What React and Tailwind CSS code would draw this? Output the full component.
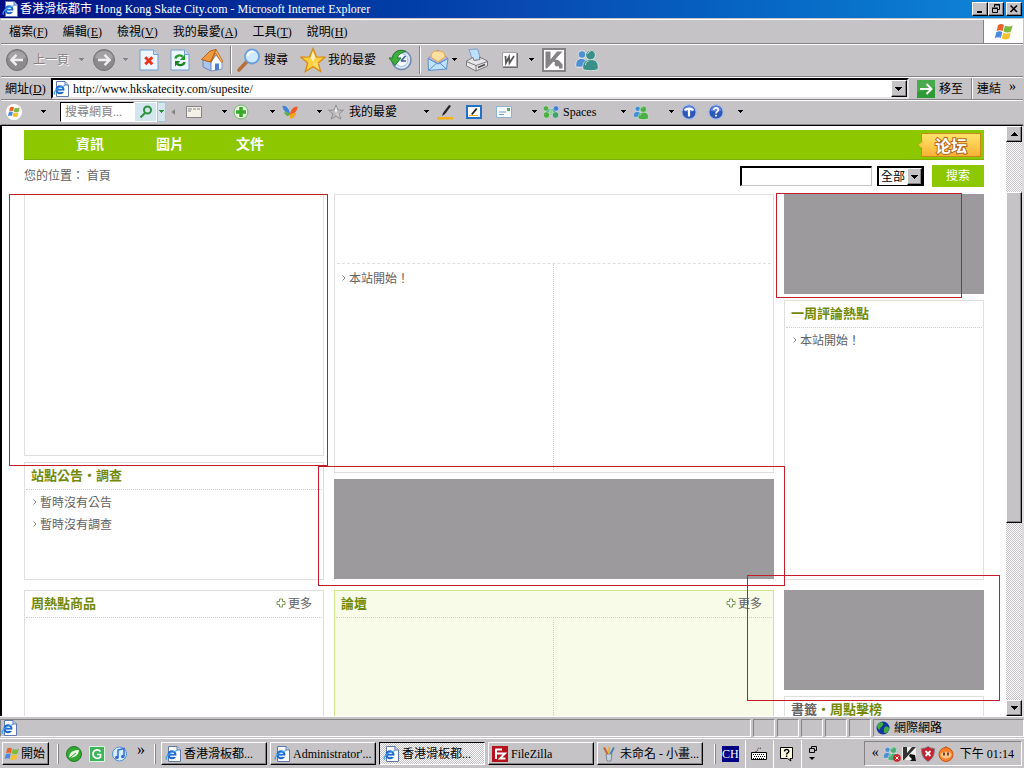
import React from "react";

const raised =
  "border border-t-white border-l-white border-r-black border-b-black shadow-[inset_-1px_-1px_0_#848284]";
const dither =
  "bg-[repeating-conic-gradient(#ffffff_0_25%,#c6c3c6_0_50%)] bg-[length:2px_2px]";

/* ---------- icons ---------- */

function IeIcon({ className = "size-4" }) {
  return (
    <svg viewBox="0 0 16 16" className={className} aria-hidden="true">
      <path d="M3.500.5h8.500l3.500 3.500v11.500h-12z" fill="#fff" stroke="#5f78ad" />
      <path d="M12 .5V4h3.500" fill="#c6d6f2" stroke="#5f78ad" />
      <circle cx="7" cy="8.800" r="3.500" fill="#d4ebff" stroke="#1c66cc" strokeWidth="2" />
      <path d="M4 8.800h6" stroke="#1c66cc" strokeWidth="1.500" />
      <path d="M8.800 9.600h3.200v1.300H8.800z" fill="#fff" />
      <path d="M1.600 13.600C-.2 11.500 4 6 12.200 4.500" fill="none" stroke="#3aa0ee" strokeWidth="1.200" />
    </svg>
  );
}

function WindowsFlag({ className }) {
  return (
    <svg viewBox="0 0 20 18" className={className} aria-hidden="true">
      <path d="M4 2.200C6 .8 8 .8 10 2L8.600 8C6.600 6.900 4.600 6.900 2.600 8.100z" fill="#e8622c" />
      <path d="M11 2.600c2.400 1.200 4.700 1.200 7.600-.2L17 8.500c-2.400 1.300-4.800 1.200-7.400 0z" fill="#7cba3c" />
      <path d="M2.300 9.200c2-1.200 4-1.200 6-.1L6.900 15C5 13.900 3 13.900.8 15.200z" fill="#4a8be0" />
      <path d="M9.300 9.700c2.600 1.200 5 1.200 7.400-.1l-1.500 6c-2.400 1.200-4.700 1.200-7.400-.1z" fill="#f6c12c" />
    </svg>
  );
}

function Caret({ className = "fill-black" }) {
  return (
    <svg viewBox="0 0 7 4" className={`h-1 w-[7px] ${className}`} shapeRendering="crispEdges" aria-hidden="true">
      <path d="M1 0h5v1H1zM2 1h3v1H2zM3 2h1v1H3z" />
    </svg>
  );
}

function WideCaret() {
  return (
    <svg viewBox="0 0 7 4" className="h-1 w-[7px]" shapeRendering="crispEdges" aria-hidden="true">
      <path d="M0 0h7v1H0zM1 1h5v1H1zM2 2h3v1H2zM3 3h1v1H3z" />
    </svg>
  );
}

function RoundArrow({ flip }) {
  return (
    <svg viewBox="0 0 24 24" className="size-6" aria-hidden="true">
      <circle cx="12" cy="12" r="10.500" fill="#8c8a8c" stroke="#737173" />
      <path d="M3 9.500a9.500 9.500 0 0 1 18 0c-5 3-13 3-18 0z" fill="#a5a2a5" />
      <path
        d={flip ? "M6 12h11M12.500 6.800 17.700 12l-5.200 5.200" : "M18 12H7M11.500 6.800 6.300 12l5.200 5.200"}
        fill="none" stroke="#efefef" strokeWidth="2.400"
      />
    </svg>
  );
}

function StopIcon() {
  return (
    <svg viewBox="0 0 20 22" className="h-[22px] w-5" aria-hidden="true">
      <path d="M1 1h13.500L19 5.500V21H1z" fill="#eef6ff" stroke="#6f9fd8" />
      <path d="M14.500 1v4.500H19" fill="#c6dcf5" stroke="#6f9fd8" />
      <path d="m6.300 8.300 7 7m0-7-7 7" stroke="#e8361c" strokeWidth="3" />
    </svg>
  );
}

function RefreshIcon() {
  return (
    <svg viewBox="0 0 20 22" className="h-[22px] w-5" aria-hidden="true">
      <path d="M1 1h13.500L19 5.500V21H1z" fill="#eef6ff" stroke="#6f9fd8" />
      <path d="M14.500 1v4.500H19" fill="#c6dcf5" stroke="#6f9fd8" />
      <path d="M5.300 9.500c.7-3 5-4.200 7.400-1.800" fill="none" stroke="#229a2a" strokeWidth="2.400" />
      <path d="M15 5.500v5.500H9.800z" fill="#229a2a" />
      <path d="M14.700 13c-.7 3-5 4.200-7.400 1.800" fill="none" stroke="#168220" strokeWidth="2.400" />
      <path d="M5 17.500V12h5.200z" fill="#168220" />
    </svg>
  );
}

function HomeIcon() {
  return (
    <svg viewBox="0 0 24 24" className="size-6" aria-hidden="true">
      <path d="M3 12l8 2v9l-8-4z" fill="#a9c4ee" stroke="#6a83bd" />
      <path d="m11 14 5-7 6 7v7l-11 2z" fill="#f7fbff" stroke="#7f97c8" />
      <path d="M1.500 11.500 10 3l6-1.500L10.500 14z" fill="#f09a3e" stroke="#b8621a" />
      <path d="m16 1.500 7 12-1.500 1L15.500 5 11 14.500z" fill="#f7b869" stroke="#b8621a" strokeWidth=".8" />
      <path d="M15 15.500h4V22l-4 .6z" fill="#4e7ed0" />
    </svg>
  );
}

function SearchIcon() {
  return (
    <svg viewBox="0 0 24 24" className="size-6" aria-hidden="true">
      <path d="m2 22 8-8.500" stroke="#b5713c" strokeWidth="3.600" strokeLinecap="round" />
      <circle cx="15" cy="8.500" r="7" fill="#cfeaff" stroke="#6a9fdc" strokeWidth="1.800" />
      <path d="M10.500 8a4.600 4.600 0 0 1 6-4.300" fill="none" stroke="#fff" strokeWidth="2" />
    </svg>
  );
}

function StarIcon({ className, fill, stroke }) {
  return (
    <svg viewBox="0 0 26 26" className={className} aria-hidden="true">
      <path
        d="m13 1.500 3.400 8.300 8.600.4-6.700 5.700 2.400 8.600L13 19.700l-7.700 4.800 2.400-8.600L1 10.200l8.600-.4z"
        fill={fill} stroke={stroke} strokeWidth="1.300"
      />
      <path d="m13 4 2.200 6.800-2.200 4-2.200-4z" fill="#fff" opacity=".7" />
      <path d="m13 15 7 1-2 1 1.500 5.500L13 18z" fill="#fff" opacity=".25" />
    </svg>
  );
}

function HistoryIcon() {
  return (
    <svg viewBox="0 0 24 24" className="size-6" aria-hidden="true">
      <circle cx="13.500" cy="12" r="9.500" fill="#dceafa" stroke="#7288b4" strokeWidth="1.600" />
      <circle cx="13.500" cy="12" r="6.500" fill="#f4faff" stroke="#a9bcd8" />
      <path d="m13 13 4.500-5M13 13h5" stroke="#3a5a94" strokeWidth="1.600" />
      <path d="M18 3.500C12 .5 5 3.500 4.500 10H1l6 7.500 6-7.500H9.500c.5-3.500 4-5.500 8.500-6.500z" fill="#3fae3f" stroke="#1e7c25" />
    </svg>
  );
}

function MailIcon() {
  return (
    <svg viewBox="0 0 24 24" className="size-6" aria-hidden="true">
      <path d="M2 10.500 12 2l10 8.500-10 5z" fill="#b8b8dc" stroke="#8e8ec0" />
      <path d="M5 9c0-5 3-6 7-6s7 1 7 6l-7 5z" fill="#fde0a0" stroke="#e8a64c" />
      <path d="M2 10.500 12 16l10-5.500L20.500 21 2.500 22.500z" fill="#bfe2fb" stroke="#5c8fce" />
      <path d="m2.500 22.500 8-7.200m10 5.700-7-6.200" stroke="#5c8fce" />
    </svg>
  );
}

function PrintIcon() {
  return (
    <svg viewBox="0 0 24 24" className="size-6" aria-hidden="true">
      <path d="M4 1.500 12.500 1 16 12l-8 1.500z" fill="#bfe0fa" stroke="#76a2d4" />
      <path d="M1.500 13 8 9.500l1 3 6-1-.6-2.500L22.500 13v5L11 23 1.500 18z" fill="#e7e5e7" stroke="#7b797b" />
      <path d="m1.500 13.500 9.500 4 11.500-4M11 17.500V23" fill="none" stroke="#7b797b" />
      <path d="m13 19.500 7-3" stroke="#4b494b" strokeWidth="1.500" />
    </svg>
  );
}

function WordIcon() {
  return (
    <svg viewBox="0 0 18 18" className="size-[18px]" aria-hidden="true">
      <path d="M1.500 1.500h14v14h-14z" fill="#fff" stroke="#a5a2a5" />
      <path d="M2 16.500h14.500V2" fill="none" stroke="#6b696b" />
      <path d="M4.500 5 5 12l3-6 .5 6L13 5" fill="none" stroke="#5a595a" strokeWidth="1.800" />
    </svg>
  );
}

function KIcon() {
  return (
    <svg viewBox="0 0 24 24" className="size-6" aria-hidden="true">
      <path d="M1 1h22v22H1z" fill="#fff" stroke="#848284" strokeWidth="2" />
      <path d="M3.500 3.500h5v8l6.500-8h5.500L5 20.500H3.500z" fill="#848284" />
      <path d="m12 11 5 1.500 3.500 4v4h-3.300l-.5-2.500-2.700.5-1.500-2 .5-2-2.500-1.500z" fill="#848284" />
    </svg>
  );
}

function Buddies({ className, left, right }) {
  return (
    <svg viewBox="0 0 24 22" className={className} aria-hidden="true">
      <path d="M1 18c-1-6 2-8.500 5.500-8.500S13 12 12 18z" fill={left} stroke="#fff" strokeWidth=".6" />
      <circle cx="7" cy="5.500" r="3.800" fill={left} stroke="#fff" strokeWidth=".6" />
      <path d="M8 20.500c-1-7 2-10 7.500-10S24 13.500 23 20.500c-4 1.500-11 1.500-15 0z" fill={right} stroke="#fff" strokeWidth=".6" />
      <circle cx="15.500" cy="6" r="4.800" fill={right} stroke="#fff" strokeWidth=".6" />
      <path d="M12.600 5a3 3 0 0 1 3-2.600M10.500 16c0-2 1-3.500 3-4" fill="none" stroke="#fff" opacity=".7" />
    </svg>
  );
}

function GoIcon() {
  return (
    <svg viewBox="0 0 18 18" className="size-[18px]" aria-hidden="true">
      <path d="M0 0h18v18H0z" fill="#2f9a3a" />
      <path d="M0 0h18v7L0 12z" fill="#58b85a" opacity=".6" />
      <path d="M3 9h11M9.500 4 14.500 9l-5 5" fill="none" stroke="#fff" strokeWidth="2" />
    </svg>
  );
}

function Butterfly() {
  return (
    <svg viewBox="0 0 16 16" className="size-4" aria-hidden="true">
      <path d="M8 10C7 4 3.500 1 .5 2c0 3.500 3 7 7.500 8z" fill="#3d86d8" />
      <path d="M2 8.500c2-.5 4.500.5 6 1.500-1 3-4 2.500-6-1.500z" fill="#58b043" />
      <path d="M8 11c0-5 4-9 7.500-8.500C16 6 12 10.500 8 11z" fill="#ee5a24" />
      <path d="M8 10.500c2-1.500 5-2 6.500-1C13 13 10 15 8 14.500z" fill="#f6a21c" />
    </svg>
  );
}

function PlusBadge() {
  return (
    <svg viewBox="0 0 16 16" className="size-4" aria-hidden="true">
      <circle cx="8" cy="8" r="7" fill="#e7f7e0" stroke="#6fb865" />
      <path d="M6.200 3h3.600v3.200H13v3.600H9.800V13H6.200V9.800H3V6.200h3.200z" fill="#3aa82e" />
    </svg>
  );
}

function RoundBadge({ children }) {
  return (
    <svg viewBox="0 0 16 16" className="size-4" aria-hidden="true">
      <circle cx="8" cy="8" r="7.200" fill="#2e58b8" stroke="#a9bce6" strokeWidth="1.200" />
      <path d="M2.500 6.500a5.600 5.600 0 0 1 11 0c-3 1.500-8 1.500-11 0z" fill="#5f88dc" />
      {children}
    </svg>
  );
}

function Paws() {
  return (
    <svg viewBox="0 0 16 14" className="h-[14px] w-4" aria-hidden="true">
      <g stroke="#fff" strokeWidth=".4">
        <path d="M3 4h10v6H3z" fill="#3b9d9b" />
        <circle cx="3" cy="3.500" r="2.700" fill="#4dae43" />
        <circle cx="3.500" cy="10" r="3.200" fill="#4dae43" />
        <circle cx="13" cy="3.500" r="2.700" fill="#3f7fd6" />
        <circle cx="12.500" cy="10" r="3.200" fill="#3fa06d" />
        <circle cx="8" cy="7" r="2.200" fill="#8fd08a" />
      </g>
    </svg>
  );
}

function GreenPlus() {
  return (
    <svg viewBox="0 0 10 10" className="size-[10px]" aria-hidden="true">
      <path d="M3.500 1v2.500H1v3h2.500V9h3V6.500H9v-3H6.500V1z" fill="#fff" stroke="#7a9a4e" />
    </svg>
  );
}

/* ---------- browser chrome ---------- */

function TitleBar() {
  return (
    <header className="flex h-[18px] shrink-0 items-center bg-linear-to-r from-[#000c82] via-[#0848b0] to-[#1086d8] pr-0.5 pl-0.5 text-white">
      <IeIcon />
      <h1 className="flex-1 truncate pl-0.5 leading-[18px]">香港滑板都市 Hong Kong Skate City.com - Microsoft Internet Explorer</h1>
      <div className="flex">
        <button aria-label="最小化" className={`flex h-[14px] w-4 items-center justify-center bg-[#c6c3c6] ${raised}`}>
          <svg viewBox="0 0 10 10" className="size-[10px]"><path d="M2 7h5v2H2z" /></svg>
        </button>
        <button aria-label="還原" className={`flex h-[14px] w-4 items-center justify-center bg-[#c6c3c6] ${raised}`}>
          <svg viewBox="0 0 10 10" className="size-[10px]" fill="none" stroke="#000">
            <path d="M3.500 3V.5h5v5H6.500M3 1h6M1.500 4.500h5v4h-5zM1 4h6" />
          </svg>
        </button>
        <button aria-label="關閉" className={`ml-0.5 flex h-[14px] w-4 items-center justify-center bg-[#c6c3c6] ${raised}`}>
          <svg viewBox="0 0 10 10" className="size-[10px]"><path d="m1.500 1.500 6.500 6.500m0-6.500L1.500 8" stroke="#000" strokeWidth="1.600" /></svg>
        </button>
      </div>
    </header>
  );
}

const MENUS = [["檔案", "F"], ["編輯", "E"], ["檢視", "V"], ["我的最愛", "A"], ["工具", "T"], ["說明", "H"]];

function MenuBar() {
  return (
    <nav className="flex h-[25px] shrink-0 items-stretch border-t border-b border-t-white border-b-[#848284]">
      <ul className="flex flex-1 items-center gap-[15px] border-r border-[#848284] pl-2">
        {MENUS.map(([label, key]) => (
          <li key={key}>
            <button>{label}(<span className="underline">{key}</span>)</button>
          </li>
        ))}
      </ul>
      <div className="flex w-[39px] items-center justify-center bg-white">
        <WindowsFlag className="h-[18px] w-5" />
      </div>
    </nav>
  );
}

function Divider() {
  return <span className="h-7 w-0.5 border-l border-l-[#848284] bg-white" />;
}

function IconButton({ label, children }) {
  return <button aria-label={label} className="flex items-center justify-center">{children}</button>;
}

function StandardToolbar() {
  return (
    <div className="grid h-[33px] shrink-0 grid-cols-[32px_36px_24px_22px_20px_28px_33px_32px_6px_30px_34px_30px_58px_27px_13px_24px_8px_38px_28px_14px_32px_34px] items-center justify-items-center border-t border-b border-t-white border-b-[#848284] pb-px">
      <IconButton label="返回"><RoundArrow /></IconButton>
      <button disabled className="whitespace-nowrap text-[#848284] [text-shadow:1px_1px_0_#fff]">上一頁</button>
      <Caret className="fill-[#848284]" />
      <IconButton label="下一頁"><RoundArrow flip /></IconButton>
      <Caret className="fill-[#848284]" />
      <IconButton label="停止"><StopIcon /></IconButton>
      <IconButton label="重新整理"><RefreshIcon /></IconButton>
      <IconButton label="首頁"><HomeIcon /></IconButton>
      <Divider />
      <IconButton label="搜尋圖示"><SearchIcon /></IconButton>
      <button className="justify-self-start">搜尋</button>
      <StarIcon className="size-[26px]" fill="#fdd040" stroke="#d98a12" />
      <button className="justify-self-start">我的最愛</button>
      <IconButton label="記錄"><HistoryIcon /></IconButton>
      <Divider />
      <IconButton label="郵件"><MailIcon /></IconButton>
      <Caret />
      <IconButton label="列印"><PrintIcon /></IconButton>
      <IconButton label="編輯"><WordIcon /></IconButton>
      <Caret />
      <IconButton label="防護"><KIcon /></IconButton>
      <IconButton label="Messenger"><Buddies className="h-[22px] w-6" left="#4f8fd0" right="#3a8f86" /></IconButton>
    </div>
  );
}

function AddressBar() {
  return (
    <div className="flex h-[23px] shrink-0 items-center border-t border-b border-t-white border-b-[#848284] pl-1">
      <label htmlFor="url" className="w-[46px] whitespace-nowrap">網址(<span className="underline">D</span>)</label>
      <div className="flex h-[21px] flex-1 items-center border-2 border-t-black border-l-black border-r-[#e7e3e7] border-b-[#e7e3e7] bg-white">
        <IeIcon />
        <input id="url" defaultValue="http://www.hkskatecity.com/supesite/" className="min-w-0 flex-1 pl-1 outline-none" />
        <button aria-label="網址清單" className={`flex h-full w-4 items-center justify-center bg-[#c6c3c6] ${raised}`}><WideCaret /></button>
      </div>
      <button className="flex h-full items-center gap-1 border-r border-[#848284] px-2"><GoIcon />移至</button>
      <button className="h-full border-l border-white pr-2 pl-1">連結</button>
      <span className="w-[14px] pb-1 text-sm">»</span>
    </div>
  );
}

function SearchToolbar() {
  return (
    <div className="grid h-[25px] shrink-0 grid-cols-[26px_33px_74px_23px_9px_14px_28px_20px_26px_22px_28px_19px_26px_48px_33px_30px_27px_34px_17px_25px_37px_27px_28px_20px_27px_28px_14px] items-center justify-items-center border-t border-b border-t-white border-b-[#848284] pb-px">
      <span className="flex size-4 items-center justify-center rounded-full bg-white"><WindowsFlag className="h-3 w-[14px]" /></span>
      <Caret />
      <input aria-label="搜尋網頁" placeholder="搜尋網頁..." className="h-5 w-full border border-t-black border-l-black border-r-white border-b-white bg-white pl-1 outline-none placeholder:text-[#848284]" />
      <button aria-label="搜尋" className="flex h-5 w-full items-center justify-center border border-white bg-[#d3e6ee]">
        <svg viewBox="0 0 14 14" className="size-[14px]" fill="none" stroke="#2d9140" strokeWidth="2"><circle cx="8.500" cy="5" r="3.500" /><path d="m6 8-4.500 4.500" /></svg>
      </button>
      <button aria-label="搜尋選項" className="flex h-5 w-full items-center justify-center border border-[#9ccbdc] bg-[#d3e6ee]"><Caret className="fill-[#2d9140]" /></button>
      <svg viewBox="0 0 4 6" className="h-[6px] w-1"><path d="M4 0v6L.5 3z" fill="#848284" /></svg>
      <svg viewBox="0 0 16 12" className="h-3 w-4"><path d="M.5.5h15v11H.5z" fill="#f3f1e8" stroke="#848284" /><path d="M2 3h4M7 3h3M11 3h3M2 5h3" stroke="#848284" /></svg>
      <span className="justify-self-end"><Caret /></span>
      <PlusBadge />
      <span className="justify-self-end"><Caret /></span>
      <Butterfly />
      <span className="justify-self-end"><Caret /></span>
      <StarIcon className="size-4" fill="#bdbbbd" stroke="#848284" />
      <button>我的最愛</button>
      <span className="justify-self-end"><Caret /></span>
      <svg viewBox="0 0 16 16" className="size-4"><path d="M0 13h16v2.500H0z" fill="#f3b21a" /><path d="m5 12 1-3 6-8 2 1-6 8z" fill="#222" /></svg>
      <svg viewBox="0 0 16 14" className="h-[14px] w-4"><path d="M1 1h14v12H1z" fill="#fff" stroke="#2271c8" strokeWidth="2" /><path d="m5 9 5-6 1.500 1L6.500 10z" fill="#222" /><path d="M3 10.500h9" stroke="#f3b21a" /></svg>
      <svg viewBox="0 0 16 12" className="h-3 w-4"><path d="M.5.5h15v11H.5z" fill="#f4faff" stroke="#8cb3cf" /><path d="M3 6h7M3 8.500h5" stroke="#74a0bf" /><path d="M11 2h3v3h-3z" fill="#58a85a" /></svg>
      <span className="justify-self-end"><Caret /></span>
      <Paws />
      <button className="justify-self-start">Spaces</button>
      <span className="justify-self-end"><Caret /></span>
      <Buddies className="h-[15px] w-4" left="#3d8fd6" right="#4caf45" />
      <span className="justify-self-end"><Caret /></span>
      <RoundBadge><path d="M4 6.500C5 4 11 4 12 6.500M8 5v7.500" fill="none" stroke="#fff" strokeWidth="2.200" /></RoundBadge>
      <RoundBadge><path d="M5.800 6c0-3 4.700-2.800 4.500 0C10.200 7.700 8 7.500 8 9.500M8 10.800v1.700" fill="none" stroke="#fff" strokeWidth="1.700" /></RoundBadge>
      <span className="justify-self-end"><Caret /></span>
    </div>
  );
}

function ScrollBar() {
  return (
    <div className={`flex w-4 shrink-0 flex-col ${dither}`}>
      <button aria-label="向上捲動" className={`flex h-4 items-center justify-center bg-[#c6c3c6] ${raised}`}>
        <span className="rotate-180"><WideCaret /></span>
      </button>
      <div className="flex-[50]" />
      <div className={`flex-[330] bg-[#c6c3c6] ${raised}`} />
      <div className="flex-[177]" />
      <button aria-label="向下捲動" className={`flex h-4 items-center justify-center bg-[#c6c3c6] ${raised}`}><WideCaret /></button>
    </div>
  );
}

/* ---------- web page ---------- */

/* Red outline drawn over a panel and its surroundings. */
function Mark({ className }) {
  return <div className={`pointer-events-none absolute z-10 border border-[#c61c29] ${className}`} />;
}

function AdBlock({ children }) {
  return <div className="relative h-[100px] shrink-0 bg-[#9c9a9c]">{children}</div>;
}

function PanelTitle({ children, more }) {
  return (
    <div className="mx-px flex h-[27px] items-center justify-between border-b border-dotted border-[#cfcfc4] pr-[10px] pb-0.5 pl-[5px]">
      <h2 className="text-[13px] font-bold text-[#738a08]">{children}</h2>
      {more && <a href="#more" className="flex items-center gap-0.5"><GreenPlus />更多</a>}
    </div>
  );
}

function Item({ children }) {
  return (
    <li className="flex h-[22px] items-center gap-[3px]">
      <svg viewBox="0 0 4 6" className="h-[6px] w-1" fill="none" stroke="#848284"><path d="M.5.5 3 3 .5 5.500" /></svg>
      <a href="#item">{children}</a>
    </li>
  );
}

const panel = "border border-[#dedfde]";

function SiteHeader() {
  return (
    <div className="flex h-[30px] items-center border-b border-[#7bae00] bg-[#8cc700] pr-[3px] pl-[26px]">
      <ul className="flex flex-1 pb-[3px] text-sm font-bold text-white">
        {["資訊", "圖片", "文件"].map((t) => (
          <li key={t} className="w-20 text-center"><a href="#nav">{t}</a></li>
        ))}
      </ul>
      <a href="#forum" className="relative flex h-6 w-[60px] items-center justify-center border border-[#c98a1c] bg-linear-to-b from-[#ffe36a] to-[#f9b233] text-base font-bold text-white [-webkit-text-stroke:2px_#b5651d] [paint-order:stroke_fill]">
        <svg viewBox="0 0 5 8" className="absolute -left-1 h-2 w-[5px]"><path d="M5 0v8L.5 4z" fill="#fbc84a" stroke="#c98a1c" strokeWidth=".6" /></svg>
        论坛
      </a>
    </div>
  );
}

function SearchRow() {
  return (
    <form className="flex h-[34px] items-center justify-between pb-0.5" onSubmit={(e) => e.preventDefault()}>
      <p className="pb-0.5">您的位置： <a href="#home">首頁</a></p>
      <div className="flex items-center gap-[5px]">
        <input aria-label="關鍵字" className="h-5 w-[132px] border-t-2 border-r border-b border-l-2 border-t-black border-r-[#c6c3c6] border-b-[#c6c3c6] border-l-black bg-white outline-none" />
        <div className="relative flex">
          <select aria-label="分類" className="h-5 w-[47px] appearance-none border-t-2 border-r-2 border-b border-l-2 border-black bg-white pb-0.5 pl-0.5 text-black outline-none">
            <option>全部</option>
          </select>
          <span className={`pointer-events-none absolute top-0.5 right-0.5 bottom-px flex w-[15px] items-center justify-center bg-[#c6c3c6] ${raised}`}><WideCaret /></span>
        </div>
        <button className="ml-[3px] h-[22px] w-[52px] bg-[#8cc700] pb-0.5 text-white">搜索</button>
      </div>
    </form>
  );
}

function Site() {
  return (
    <main className="min-w-0 flex-1 overflow-hidden bg-white pt-1 font-['Noto_Sans_CJK_TC','Liberation_Serif',sans-serif] text-[#636163]">
      <div className="mx-auto max-w-[960px]">
        <SiteHeader />
        <SearchRow />
        <div className="grid grid-cols-[300px_minmax(0,1fr)_200px] gap-[10px]">
          <div className="flex flex-col gap-[6px]">
            <section className={`relative h-[262px] ${panel}`}>
              <Mark className="-top-px -right-[5px] -bottom-[11px] -left-4" />
            </section>
            <section className={`flex-1 ${panel}`}>
              <PanelTitle>站點公告‧調查</PanelTitle>
              <ul className="px-2 pt-px"><Item>暫時沒有公告</Item><Item>暫時沒有調查</Item></ul>
            </section>
          </div>

          <div className="flex flex-col gap-[6px]">
            <section className={`flex h-[279px] flex-col ${panel}`}>
              <div className="mx-0.5 h-[69px] border-b border-dashed border-[#dedfde]" />
              <div className="grid flex-1 grid-cols-2 pb-0.5">
                <ul className="border-r border-dotted border-[#cfcfcf] px-[7px] pt-[3px]"><Item>本站開始！</Item></ul>
              </div>
            </section>
            <AdBlock><Mark className="-top-[13px] -right-[11px] -bottom-[7px] -left-4" /></AdBlock>
          </div>

          <div className="flex flex-col gap-[6px]">
            <AdBlock><Mark className="-top-px right-[22px] -bottom-1 -left-2" /></AdBlock>
            <section className={`h-[280px] ${panel}`}>
              <PanelTitle>一周評論熱點</PanelTitle>
              <ul className="px-2 pt-px"><Item>本站開始！</Item></ul>
            </section>
          </div>

          <section className={`h-[260px] ${panel}`}>
            <PanelTitle more>周熱點商品</PanelTitle>
          </section>

          <section className="flex h-[260px] flex-col border border-[#cfe88c] bg-[#f7fbe7]">
            <PanelTitle more>論壇</PanelTitle>
            <div className="grid flex-1 grid-cols-2 pt-0.5">
              <div className="border-r border-dotted border-[#c6cfb5]" />
            </div>
          </section>

          <div className="flex flex-col gap-[6px]">
            <AdBlock><Mark className="-top-[15px] -right-4 -bottom-[11px] -left-[37px]" /></AdBlock>
            <section className={`flex-1 ${panel}`}>
              <PanelTitle><span className="text-[#636163]">書籤</span>‧周點擊榜</PanelTitle>
            </section>
          </div>
        </div>
      </div>
    </main>
  );
}

/* ---------- status bar and taskbar ---------- */

const sunken = "border border-t-[#848284] border-l-[#848284] border-r-white border-b-white";

function StatusBar() {
  return (
    <footer className="flex h-[22px] shrink-0 gap-0.5 border-t border-white pt-0.5 pb-px">
      <div className={`flex flex-1 items-center ${sunken}`}><IeIcon /></div>
      {[0, 1, 2, 3, 4].map((i) => <div key={i} className={`w-[22px] ${sunken}`} />)}
      <div className={`flex w-[151px] items-center gap-1 pl-0.5 ${sunken}`}>
        <svg viewBox="0 0 14 14" className="size-[14px]"><circle cx="7" cy="7" r="6.500" fill="#12389c" /><path d="M3 2c3-2 5 0 4 2S4 6 4 8 1 7 1 5zM9 6c2-1 4 0 4 2s-2 4-4 4-1-5 0-6z" fill="#3fae3f" /></svg>
        網際網路
      </div>
    </footer>
  );
}

function TaskButton({ icon, active, children }) {
  return (
    <button
      className={`flex h-[23px] max-w-[106px] min-w-0 flex-1 items-center gap-[3px] pl-[3px] ${
        active ? `border border-t-black border-l-black border-r-white border-b-white ${dither}` : raised
      }`}
    >
      <span className="shrink-0">{icon}</span>
      <span className="whitespace-nowrap">{children}</span>
    </button>
  );
}

function Grip() {
  return <span className="h-5 w-0.5 shrink-0 border-l border-white bg-[#848284]" />;
}

function TaskBar() {
  return (
    <footer className="flex h-[30px] shrink-0 items-center border-t border-white pr-0.5 pl-0.5">
      <button className={`flex h-[23px] w-[47px] shrink-0 items-center gap-px pl-px ${raised}`}>
        <WindowsFlag className="size-4" />開始
      </button>
      <div className="flex shrink-0 items-center gap-[7px] pr-[5px] pl-2">
        <Grip />
        <svg viewBox="0 0 16 16" className="size-4"><circle cx="8" cy="8" r="7.500" fill="#35a535" stroke="#1c7d24" /><path d="M3 11.500C3.500 6 7 4 13 4c-.5 5-4 8-10 7.500z" fill="#e8fbe0" /><path d="M3 12.500 10 7" stroke="#35a535" /></svg>
        <svg viewBox="0 0 16 16" className="size-4"><path d="M.5.5h15v15H.500z" fill="#3db45a" stroke="#dff5e2" /><path d="M11.500 5.500C9 2.500 4 4 4 8s5 5.500 7.500 3V8.500H8" fill="none" stroke="#fff" strokeWidth="1.700" /></svg>
        <svg viewBox="0 0 16 16" className="size-4"><circle cx="7.500" cy="8" r="7" fill="#d8ecff" stroke="#4f8fd8" /><path d="M6 11.500V4l6-1.500V10" fill="none" stroke="#2f6ccc" strokeWidth="1.500" /><circle cx="4.800" cy="11.500" r="1.800" fill="#2f6ccc" /><circle cx="10.800" cy="10.500" r="1.800" fill="#2f6ccc" /></svg>
        <span className="w-3 pb-2 text-center text-base">»</span>
        <Grip />
      </div>
      <div className="flex min-w-0 flex-1 gap-[3px]">
        <TaskButton icon={<IeIcon />}>香港滑板都...</TaskButton>
        <TaskButton icon={<IeIcon />}>Administrator'...</TaskButton>
        <TaskButton icon={<IeIcon />} active>香港滑板都...</TaskButton>
        <TaskButton icon={<svg viewBox="0 0 16 16" className="size-4"><path d="M0 0h16v16H0z" fill="#b5121b" /><path d="M4 13V3.500h6M4 7.500h4M8 7.500h5l-5 5h5.500" fill="none" stroke="#fff" strokeWidth="1.900" /></svg>}>FileZilla</TaskButton>
        <TaskButton icon={<svg viewBox="0 0 16 16" className="size-4"><path d="M5 8h6l-1 7H6z" fill="#c9d3dc" stroke="#7b8994" /><path d="M3 1.500 6.500 8" stroke="#c8652c" strokeWidth="2" /><path d="M8 1v7" stroke="#e2b23a" strokeWidth="1.800" /><path d="M13 1.500 9.500 8" stroke="#4c7fc0" strokeWidth="2" /></svg>}>未命名 - 小畫...</TaskButton>
      </div>
      <div className="flex shrink-0 items-center pl-2">
        <Grip />
        <span className="mx-[6px] bg-[#000082] leading-4 text-white">CH</span>
        <span className="flex h-7 w-7 items-center justify-center border-l border-white">
          <svg viewBox="0 0 16 14" className="h-[14px] w-4" fill="none" stroke="#000"><path d="M.5 5.500h15v7H.5z" fill="#fff" /><path d="M2 7.500h12M3 9.500h11M2 11.500h12" strokeDasharray="1 1" /><path d="M5 5c0-2 2-1 2-3s2 0 3-1" strokeDasharray="1 1" /></svg>
        </span>
        <span className="flex h-7 w-7 items-center justify-center border-l border-white">
          <svg viewBox="0 0 14 16" className="h-4 w-[14px]" fill="none" stroke="#000"><path d="M.5 1.500h12v11H10l1 2.500-3.500-2.500h-7z" fill="#ffffdf" /><path d="M4.500 5.500c0-3 4.500-2.500 4.300 0C8.700 7 6.600 7 6.600 8.500M6.600 9.500V11" strokeWidth="1.500" /></svg>
        </span>
        <span className="flex h-7 w-[63px] items-center border-l border-white pl-[6px]">
          <svg viewBox="0 0 10 16" className="h-4 w-[10px]" fill="none" stroke="#000"><path d="M3.500 3V.5h5v4H6.500M1.500 2.500h5v4h-5z" /><path d="M1 11h6l-3 3z" fill="#000" stroke="none" /></svg>
        </span>
      </div>
      <div className={`flex h-[25px] shrink-0 items-center gap-[2px] pr-[7px] pl-[7px] ${sunken}`}>
        <span className="w-2 pb-0.5 text-sm">«</span>
        <span className="relative flex">
          <Buddies className="h-[15px] w-[18px]" left="#4f8fd0" right="#4caf75" />
          <svg viewBox="0 0 8 8" className="absolute -right-px -bottom-px size-2"><circle cx="4" cy="4" r="3.800" fill="#cc2027" /><path d="m2.500 2.500 3 3m0-3-3 3" stroke="#fff" /></svg>
        </span>
        <svg viewBox="0 0 16 16" className="size-4"><path d="M0 1h14v13H0z" fill="#eee" /><path d="M1 1h4v6l5-6h4L2 14H1z" fill="#333" /><path d="m8 8 5 1 1 6h-6l2-2-3-3z" fill="#111" /></svg>
        <svg viewBox="0 0 16 16" className="size-4"><path d="M8 .5c2 1.500 4 2 6.500 2 0 6-1.500 10-6.500 13-5-3-6.500-7-6.500-13C4 2.500 6 2 8 .5z" fill="#c8202e" stroke="#7d7d80" /><path d="m5.500 5 5 5m0-5-5 5" stroke="#fff" strokeWidth="1.800" /></svg>
        <svg viewBox="0 0 16 16" className="size-4"><circle cx="8" cy="8.500" r="7" fill="#f6812a" stroke="#c9561a" /><path d="M2.500 8c2-3 9-3 11 0 0 6-11 6-11 0z" fill="#ffc48a" /><path d="M6 6.500v3M10 6.500v3" stroke="#4a1c08" strokeWidth="1.500" /><path d="M6 2 8 0l1.500 2z" fill="#c9561a" /></svg>
        <time className="pl-1 whitespace-nowrap">下午 01:14</time>
      </div>
    </footer>
  );
}

export default function App() {
  return (
    <div className="flex h-screen flex-col overflow-hidden bg-[#c6c3c6] font-['Liberation_Serif','Noto_Sans_CJK_TC',serif] text-xs leading-4 text-black">
      <TitleBar />
      <div className="flex min-h-0 flex-1 flex-col pt-px">
        <div className="flex shrink-0 flex-col px-px">
          <MenuBar />
          <StandardToolbar />
          <AddressBar />
          <SearchToolbar />
        </div>
        <div className="flex min-h-0 flex-1 border-t border-r-2 border-l-2 border-t-black border-r-[#dedbde] border-l-black">
          <Site />
          <ScrollBar />
        </div>
        <StatusBar />
      </div>
      <TaskBar />
    </div>
  );
}
